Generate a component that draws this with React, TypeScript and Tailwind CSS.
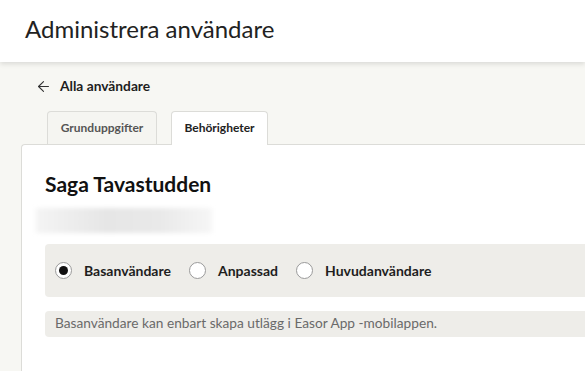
import { ArrowLeft } from 'lucide-react';

const font = { fontFamily: 'Lato, "Noto Sans", sans-serif' };

function Radio({ label, checked }: { label: string; checked?: boolean }) {
    return (
        <label className="mr-[18px] flex items-center gap-[12px]">
            <span className="flex h-[17px] w-[17px] items-center justify-center rounded-full border border-[#9a9a9a] bg-white">
                {checked && <span className="h-[9px] w-[9px] rounded-full bg-[#111]" />}
            </span>
            <span className="text-[14px] font-bold text-[#1e1e1e]">{label}</span>
        </label>
    );
}

export default function App() {
    return (
        <div className="h-[371px] w-[585px] overflow-hidden bg-[#f7f7f3]" style={font}>
            {/* Header */}
            <header className="relative z-10 h-[62px] bg-white pl-[25px] pt-[13px] shadow-[0_2px_5px_rgba(0,0,0,0.12)]">
                <h1 className="text-[24px] font-normal leading-[32px] text-[#222]">Administrera användare</h1>
            </header>

            {/* Back link */}
            <div className="flex items-center gap-[8px] pl-[35px] pt-[14px] text-[13.75px] font-bold text-[#1e1e1e]">
                <ArrowLeft className="h-[17px] w-[17px] text-[#333]" strokeWidth={1.5} />
                <span>Alla användare</span>
            </div>

            {/* Tabs */}
            <div className="mt-[14px] flex gap-[14px] pl-[47px]">
                <div className="flex h-[33px] w-[110px] items-center justify-center rounded-t-[4px] border border-b-0 border-[#dcdcd8] bg-[#f5f5f1] text-[12px] font-bold text-[#555]">
                    Grunduppgifter
                </div>
                <div className="relative z-10 -mb-px flex h-[34px] w-[97px] items-center justify-center rounded-t-[4px] border border-b-0 border-[#dcdcd8] bg-white text-[12px] font-bold text-[#222]">
                    Behörigheter
                </div>
            </div>

            {/* Card */}
            <div className="ml-[21px] h-[240px] rounded-tl-[4px] border-l border-t border-[#dcdcd8] bg-white pl-[23px] pt-[26px]">
                <h2 className="text-[21px] font-bold leading-[26px] text-[#111]">Saga Tavastudden</h2>
                <div className="-ml-[9px] mt-[11px] h-[25px] w-[176px] bg-[linear-gradient(90deg,#f4f4f4,#e6e6e6_40%,#e9e9e9_70%,#f6f6f6)] blur-[2px]" />

                <div className="mt-[11px] flex h-[53px] items-center rounded-l-[4px] bg-[#eeede9] pl-[10px]">
                    <Radio label="Basanvändare" checked />
                    <Radio label="Anpassad" />
                    <Radio label="Huvudanvändare" />
                </div>

                <div className="mt-[14px] flex h-[26px] items-center rounded-l-[4px] bg-[#eeede9] pl-[10px] text-[13.7px] text-[#6a6a6a]">
                    Basanvändare kan enbart skapa utlägg i Easor App -mobilappen.
                </div>
            </div>
        </div>
    );
}
